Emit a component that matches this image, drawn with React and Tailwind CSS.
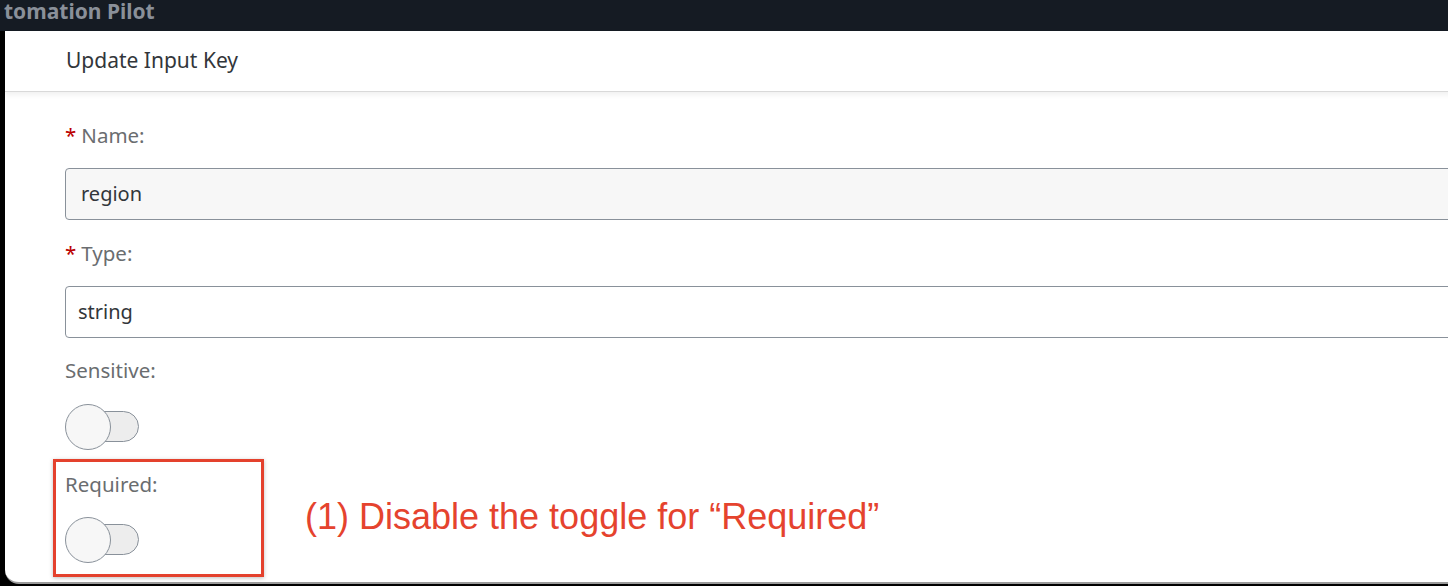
import React from 'react';

const Toggle = () => (
    <div className="relative w-[74px] h-[46px]">
        <div className="absolute right-0 top-[7px] w-[58px] h-[31px] rounded-full bg-[#ededed] border border-[#89919a]" />
        <div className="absolute left-0 top-0 w-[46px] h-[46px] rounded-full bg-[#f7f7f7] border border-[#89919a]" />
    </div>
);

const Label = ({ text, required }) => (
    <div className="h-[24px] flex items-center text-[20.5px] leading-[24px] text-[#6a6d70]">
        {required && <span className="text-[#bb0000] mr-[5px]">*</span>}
        <span>{text}</span>
    </div>
);

const App = () => {
    return (
        <div className="w-[1448px] h-[586px] bg-black overflow-hidden relative" style={{ fontFamily: '"Noto Sans", "Open Sans", sans-serif' }}>
            {/* top app bar */}
            <div className="h-[31px] bg-[#151b23] flex items-start pl-[4px]">
                <span className="text-[21px] font-bold text-[#8a9099] leading-[22px]">tomation Pilot</span>
            </div>

            <div className="flex">
                <div className="w-[5px] bg-black shrink-0" />
                {/* dialog */}
                <div className="w-[1520px] shrink-0 h-[553px] bg-white rounded-bl-[14px] border-b-2 border-[#9b9b9b] flex flex-col">
                    <div className="h-[61px] border-b border-[#d9d9d9] shadow-[0_3px_5px_rgba(0,0,0,0.06)] flex items-center pl-[61px]">
                        <span className="text-[21px] text-[#32363a]">Update Input Key</span>
                    </div>

                    <div className="pl-[60px] pr-[65px] pt-[31px] flex flex-col">
                        <Label text="Name:" required />
                        <div className="mt-[21px] h-[52px] rounded-[4px] border border-[#89919a] bg-[#f7f7f7] flex items-center pl-[15px] text-[20px] text-[#32363a]">
                            region
                        </div>

                        <div className="mt-[21px]">
                            <Label text="Type:" required />
                        </div>
                        <div className="mt-[21px] h-[52px] rounded-[4px] border border-[#89919a] bg-white flex items-center pl-[12px] text-[20px] text-[#32363a]">
                            string
                        </div>

                        <div className="mt-[20px]">
                            <Label text="Sensitive:" />
                        </div>
                        <div className="mt-[22px]">
                            <Toggle />
                        </div>

                        <div className="mt-[22px]">
                            <Label text="Required:" />
                        </div>
                        <div className="mt-[21px]">
                            <Toggle />
                        </div>
                    </div>
                </div>
            </div>

            {/* annotation overlay */}
            <div className="absolute left-[53px] top-[459px] w-[211px] h-[118px] border-[3px] border-[#e4412d] shadow-[0_1px_4px_rgba(0,0,0,0.25)]" />
            <div className="absolute left-[305px] top-[496px] text-[36px] leading-[42px] text-[#e5432e]" style={{ fontFamily: '"Liberation Sans", Arial, sans-serif' }}>
                (1) Disable the toggle for “Required”
            </div>
        </div>
    );
};

export default App;
